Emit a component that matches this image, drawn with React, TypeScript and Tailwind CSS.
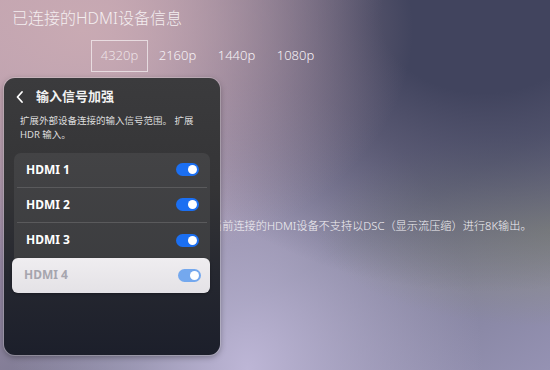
import React from "react";

const tabs = ["4320p", "2160p", "1440p", "1080p"];
const ports = ["HDMI 1", "HDMI 2", "HDMI 3"];

function Toggle({ faded }: { faded?: boolean }) {
  return (
    <div
      className={
        "flex h-[13px] w-[23px] items-center justify-end rounded-full pr-[2px] " +
        (faded ? "bg-[#74a8ee]" : "bg-[#1b6ff2]")
      }
    >
      <div className="h-[9px] w-[9px] rounded-full bg-white" />
    </div>
  );
}

function SignalPanel() {
  return (
    <div className="absolute left-[4px] top-[78px] h-[277px] w-[216px] rounded-[11px] bg-[linear-gradient(180deg,#3b3b3d_0%,#343436_40%,#262830_70%,#1c1f2b_100%)] shadow-[0_2px_6px_rgba(0,0,0,0.35)] ring-1 ring-white/25">
      <div className="flex items-center gap-[11px] pl-[11px] pt-[9px]">
        <svg width="10" height="14" viewBox="0 0 10 14" className="text-white">
          <path d="M7 2 L2.5 7 L7 12" fill="none" stroke="currentColor" strokeWidth="1.8" strokeLinecap="round" strokeLinejoin="round" />
        </svg>
        <span className="text-[13px] font-bold text-[#f2f2f2]">输入信号加强</span>
      </div>
      <p className="mt-[7px] pl-[16px] pr-[10px] text-[9.5px] leading-[14px] text-[#dcdcdc]">
        扩展外部设备连接的输入信号范围。 扩展
        <br />
        HDR 输入。
      </p>
      <div className="mx-[10px] mt-[11px] flex flex-col rounded-[7px] bg-[linear-gradient(180deg,#434345,#3a3b3e)]">
        {ports.map((p, i) => (
          <div
            key={p}
            className={
              "mx-[3px] flex h-[35px] items-center justify-between pl-[9px] pr-[8px] " +
              (i < ports.length - 1 ? "border-b border-[#5a5a5c]" : "")
            }
          >
            <span className="text-[12px] font-bold text-white">{p}</span>
            <Toggle />
          </div>
        ))}
        <div className="-ml-[2px] flex h-[35px] items-center justify-between rounded-[6px] bg-[linear-gradient(180deg,#efedf0,#e4e2e6)] pl-[12px] pr-[9px] shadow-[0_1px_3px_rgba(0,0,0,0.3)]">
          <span className="text-[12px] font-bold text-[#a6a5ae]">HDMI 4</span>
          <Toggle faded />
        </div>
      </div>
    </div>
  );
}

export default function App() {
  return (
    <div
      className="relative h-[370px] w-[550px] overflow-hidden bg-[radial-gradient(ellipse_at_15%_8%,#c9aab3_0%,rgba(201,170,179,0)_50%),radial-gradient(ellipse_at_88%_5%,#41445e_0%,#41445e_15%,rgba(65,68,94,0)_55%),radial-gradient(ellipse_at_100%_62%,#8b8d88_0%,rgba(139,141,136,0)_30%),radial-gradient(ellipse_at_45%_100%,#bdb6d6_0%,rgba(189,182,214,0)_55%),linear-gradient(150deg,#bc9fae_0%,#9a8aa6_35%,#77778f_65%,#9592b3_100%)]"
      style={{ fontFamily: '"Noto Sans", "Noto Sans CJK SC", sans-serif' }}
    >
      <div className="flex flex-col">
        <h1 className="pl-[12px] pt-[6px] text-[16px] font-light text-[#f4eef0]">
          已连接的HDMI设备信息
        </h1>
        <div className="ml-[91px] mt-[10px] flex items-center">
          {tabs.map((t, i) => (
            <div
              key={t}
              className={
                "flex h-[32px] items-center justify-center text-[13px] font-light " +
                (i === 0
                  ? "w-[57px] border border-white/60 text-white/70"
                  : "w-[59px] text-[#f6f2f6]")
              }
            >
              {t}
            </div>
          ))}
        </div>
        <p className="ml-[211px] mt-[146px] text-[11.2px] font-light text-[#f2f0f4]">
          当前连接的HDMI设备不支持以DSC（显示流压缩）进行8K输出。
        </p>
      </div>
      <SignalPanel />
    </div>
  );
}
